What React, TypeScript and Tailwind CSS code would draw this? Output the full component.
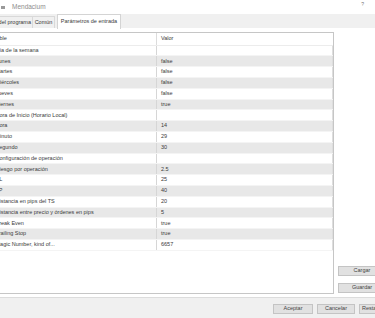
import React from "react";

type Row = { name: string; value: string };

const rows: Row[] = [
  { name: "Día de la semana", value: "" },
  { name: "Lunes", value: "false" },
  { name: "Martes", value: "false" },
  { name: "Miércoles", value: "false" },
  { name: "Jueves", value: "false" },
  { name: "Viernes", value: "true" },
  { name: "Hora de Inicio (Horario Local)", value: "" },
  { name: "Hora", value: "14" },
  { name: "Minuto", value: "29" },
  { name: "Segundo", value: "30" },
  { name: "Configuración de operación", value: "" },
  { name: "Riesgo por operación", value: "2.5" },
  { name: "SL", value: "25" },
  { name: "TP", value: "40" },
  { name: "Distancia en pips del TS", value: "20" },
  { name: "Distancia entre precio y órdenes en pips", value: "5" },
  { name: "Break Even", value: "true" },
  { name: "Trailing Stop", value: "true" },
  { name: "Magic Number, kind of...", value: "6657" },
];

function Btn({ label, className }: { label: string; className?: string }) {
  return (
    <div
      className={
        "h-[10px] shrink-0 bg-[#e1e1e1] border border-[#c4c4c4] flex items-center justify-center text-[#444] " +
        (className ?? "")
      }
    >
      {label}
    </div>
  );
}

export default function App() {
  return (
    <div
      className="w-[375px] h-[318px] overflow-hidden bg-white flex flex-col text-[5.5px] leading-none text-[#3a3a3a]"
      style={{ fontFamily: '"Liberation Sans", Arial, sans-serif' }}
    >
      {/* title bar */}
      <div className="h-[14px] shrink-0 flex items-center relative">
        <div className="w-[4px] h-[3px] bg-[#9a9a9a] ml-[1px]" />
        <span className="ml-[7px] text-[6.5px] text-[#8d8d8d]">Mendacium</span>
        <span className="ml-auto mr-[11px] text-[5px] text-[#777] -mt-[5px]">?</span>
      </div>

      {/* tabs */}
      <div className="h-[14px] shrink-0 bg-[#f0f0f0] flex items-end relative">
        <div className="h-[12px] w-[33px] border-r border-t border-[#d9d9d9] flex items-center justify-end pr-[1px] overflow-hidden whitespace-nowrap">
          Acerca del programa
        </div>
        <div className="h-[12px] w-[22px] border-r border-t border-[#d9d9d9] flex items-center justify-center">
          Común
        </div>
        <div className="h-[15px] w-[64px] ml-[2px] bg-white border-x border-t border-[#d4d4d4] flex items-center justify-center -mb-[1px] pb-[1px]">
          Parámetros de entrada
        </div>
      </div>

      {/* content */}
      <div className="flex-1 flex pt-[4px] pb-[3px]">
        <div className="w-[334px] shrink-0 border-y border-r border-[#c6c6c6] overflow-hidden whitespace-nowrap">
          <div className="h-[12.7px] flex border-b border-[#ececec]">
            <div className="w-[157px] border-r border-[#dcdcdc] flex items-center">
              <span className="-ml-[13px]">Variable</span>
            </div>
            <div className="flex items-center pl-[4px]">Valor</div>
          </div>
          {rows.map((r, i) => (
            <div
              key={r.name}
              className={
                "h-[10.8px] flex border-b border-[#f4f4f4] " +
                (i % 2 === 1 ? "bg-[#e8e8e8]" : "bg-white")
              }
            >
              <div className="w-[157px] shrink-0 border-r border-[#d6d6d6] flex items-center overflow-hidden">
                <span className="-ml-[4.5px]">{r.name}</span>
              </div>
              <div className="flex-1 flex items-center pl-[4px] border-r border-[#dedede]">{r.value}</div>
            </div>
          ))}
        </div>
        <div className="flex-1 flex flex-col justify-end gap-[7px] pl-[4px] pb-[1px] overflow-hidden">
          <Btn label="Cargar" className="w-[48px]" />
          <Btn label="Guardar" className="w-[48px]" />
        </div>
      </div>

      {/* bottom bar */}
      <div className="h-[21px] shrink-0 bg-[#f0f0f0] border-t border-[#dcdcdc] flex items-start pt-[6px] pl-[273px] gap-[4px] overflow-hidden">
        <Btn label="Aceptar" className="w-[40px]" />
        <Btn label="Cancelar" className="w-[38px]" />
        <Btn label="Restablecer" className="w-[44px] justify-start pl-[2px]" />
      </div>
    </div>
  );
}
